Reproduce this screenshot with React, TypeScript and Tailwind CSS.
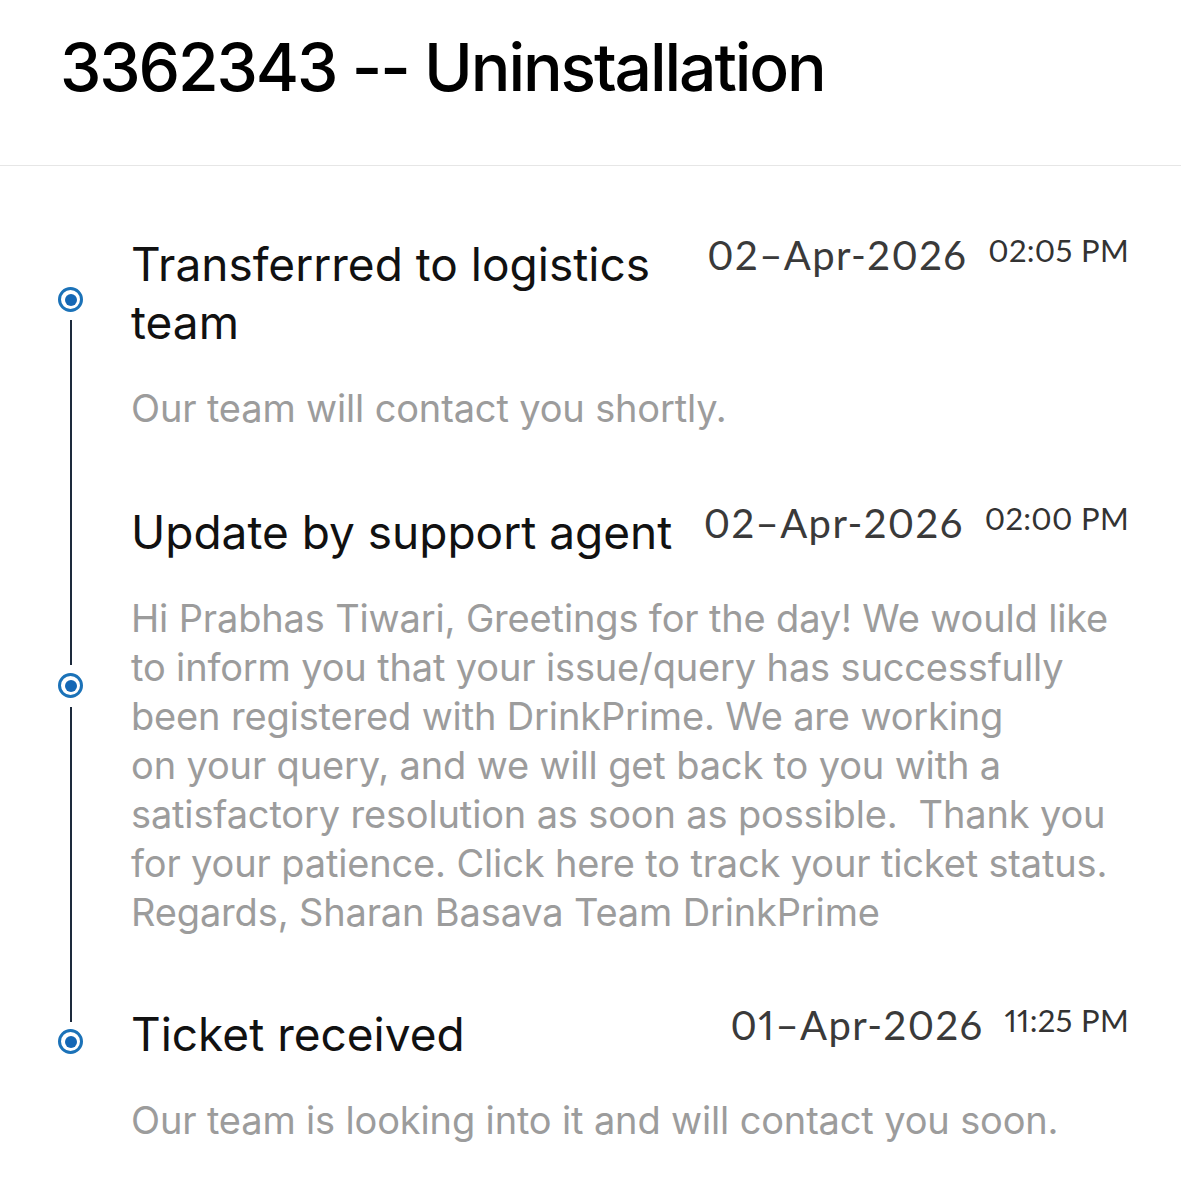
import React from "react";

type Item = {
  title: React.ReactNode;
  date: string;
  time: string;
  lines: string[];
  titleMt: string;
};

const items: Item[] = [
  {
    title: (
      <>
        Transferrred to logistics
        <br />
        team
      </>
    ),
    date: "02–Apr-2026",
    time: "02:05 PM",
    lines: ["Our team will contact you shortly."],
    titleMt: "mt-0",
  },
  {
    title: "Update by support agent",
    date: "02–Apr-2026",
    time: "02:00 PM",
    lines: [
      "Hi Prabhas Tiwari, Greetings for the day! We would like",
      "to inform you that your issue/query has successfully",
      "been registered with DrinkPrime. We are working",
      "on your query, and we will get back to you with a",
      "satisfactory resolution as soon as possible.\u00a0 Thank you",
      "for your patience. Click here to track your ticket status.",
      "Regards, Sharan Basava Team DrinkPrime",
    ],
    titleMt: "mt-[70px]",
  },
  {
    title: "Ticket received",
    date: "01–Apr-2026",
    time: "11:25 PM",
    lines: ["Our team is looking into it and will contact you soon."],
    titleMt: "mt-[68px]",
  },
];

function Dot({ className }: { className: string }) {
  return (
    <div
      className={`flex h-[25px] w-[25px] shrink-0 items-center justify-center rounded-full border-[3px] border-[#1b72b8] bg-white ${className}`}
    >
      <div className="h-[12px] w-[12px] rounded-full bg-[#1467b5]" />
    </div>
  );
}

function Line({ className }: { className: string }) {
  return <div className={`ml-[12px] w-[2px] shrink-0 bg-[#1d2a3c] ${className}`} />;
}

export default function App() {
  return (
    <div className="min-h-[1200px] w-full bg-white font-['Inter',sans-serif]">
      <div className="border-b border-[#e6e6e6] pb-[58px] pl-[60px] pt-[27px]">
        <h1 className="text-[66px] font-medium leading-[80px] tracking-[-0.032em] text-black">
          3362343 -- Uninstallation
        </h1>
      </div>

      <div className="flex">
        {/* timeline rail */}
        <div className="flex w-[131px] shrink-0 flex-col items-start pl-[58px] pt-[121px]">
          <Dot className="" />
          <Line className="mt-[8px] h-[345px]" />
          <Dot className="mt-[8px]" />
          <Line className="mt-[9px] h-[315px]" />
          <Dot className="mt-[7px]" />
        </div>

        <div className="min-w-0 flex-1 pr-[52px] pt-[69px]">
          {items.map((it, i) => (
            <div key={i} className={it.titleMt}>
              <div className="flex items-start">
                <div className="min-w-0 flex-1 whitespace-nowrap text-[46px] leading-[58px] tracking-[0em] text-[#111111]">
                  {it.title}
                </div>
                <div className="shrink-0 font-['Lato',sans-serif] text-[40px] leading-none tracking-[0.035em] text-[#3a3a3a] proportional-nums">
                  {it.date}
                </div>
                <div className="ml-[21px] shrink-0 font-['Lato',sans-serif] text-[31px] leading-none tracking-[0.01em] text-[#333333] proportional-nums">
                  {it.time}
                </div>
              </div>
              <div className="mt-[33px] text-[38px] leading-[49px] tracking-[-0.004em] text-[#9c9c9c]">
                {it.lines.map((l, j) => (
                  <div key={j} className="whitespace-nowrap">
                    {l}
                  </div>
                ))}
              </div>
            </div>
          ))}
        </div>
      </div>
    </div>
  );
}
